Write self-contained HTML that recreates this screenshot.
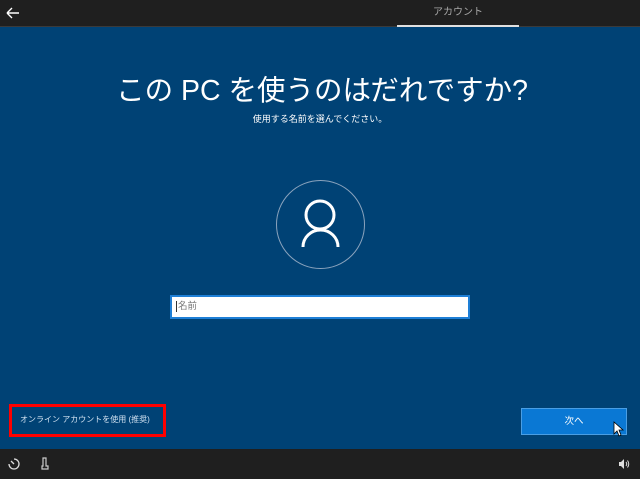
<!DOCTYPE html>
<html><head><meta charset="utf-8"><style>
body{margin:0;width:640px;height:479px;overflow:hidden;background:#004275;font-family:"Liberation Sans","Noto Sans CJK JP",sans-serif;position:relative}
.top{position:absolute;left:0;top:0;width:640px;height:26px;background:#1f1f1f;border-bottom:1px solid #3a3a3a}
.tab{position:absolute;left:397px;top:0;width:122px;height:26px;color:#a8a8a8;font-size:10px;text-align:center;line-height:26px}
.tabline{position:absolute;left:397px;top:25px;width:122px;height:2px;background:#e0e0e0}
h1{position:absolute;left:0;top:74px;width:644px;margin:0;text-align:center;color:#fff;font-weight:normal;font-size:28.5px;line-height:34px;letter-spacing:0px}
.sub{position:absolute;left:0;top:112px;width:640px;text-align:center;color:#fff;font-size:9px}
.circle{position:absolute;left:276px;top:180px;width:87px;height:87px;border:1px solid #8aa3bd;border-radius:50%}
.input{position:absolute;left:170px;top:295px;width:292px;height:20px;background:#fff;border:2px solid #1e7fd6;font-size:9.5px;color:#777;line-height:20px;padding-left:4px;box-sizing:content-box}
.red{position:absolute;left:9px;top:404px;width:151px;height:27px;border:3px solid #f00}
.link{position:absolute;left:20px;top:414px;color:#cfe0f0;font-size:8px;white-space:nowrap}
.btn{position:absolute;left:521px;top:408px;width:104px;height:25px;background:#0a78d4;border:1px solid #4a9ee4;color:#fff;font-size:9.5px;text-align:center;line-height:25px}
.bot{position:absolute;left:0;top:449px;width:640px;height:30px;background:#1f1f1f}
</style></head><body>
<div class="top">
<svg style="position:absolute;left:6px;top:6px" width="14" height="14" viewBox="0 0 14 14"><path d="M1 7H13M1 7L6 2M1 7L6 12" stroke="#fff" stroke-width="1.4" fill="none"/></svg>
<div class="tab">アカウント</div>
</div>
<div class="tabline"></div>
<h1>この PC を使うのはだれですか?</h1>
<div class="sub">使用する名前を選んでください。</div>
<div class="circle"></div>
<svg style="position:absolute;left:296px;top:195px" width="50" height="56" viewBox="0 0 50 56"><circle cx="24" cy="20" r="14" stroke="#fff" stroke-width="3" fill="none"/><path d="M7 52A17.5 17 0 0 1 42 52" stroke="#fff" stroke-width="3" fill="none"/></svg>
<div class="input"><span style="border-left:1px solid #333;padding-left:1px">名前</span></div>
<div class="red"></div>
<div class="link">オンライン アカウントを使用 (推奨)</div>
<div class="btn">次へ</div>
<svg style="position:absolute;left:613px;top:421px" width="12" height="16" viewBox="0 0 12 16"><path d="M1 1V13L4 10L6 15L8 14L6 9H10Z" fill="#fff" stroke="#000" stroke-width="0.8"/></svg>
<div class="bot">
<svg style="position:absolute;left:8px;top:9px" width="12" height="12" viewBox="0 0 12 12"><path d="M6 1A5 5 0 1 1 1 6" stroke="#ddd" stroke-width="1.3" fill="none"/><path d="M6 6L3 3" stroke="#ddd" stroke-width="1.3"/></svg>
<svg style="position:absolute;left:40px;top:8px" width="10" height="14" viewBox="0 0 10 14"><path d="M3 1H6V9H8V12H2V9H3Z" stroke="#ccc" stroke-width="1.2" fill="none"/></svg>
<svg style="position:absolute;left:618px;top:10px" width="12" height="10" viewBox="0 0 12 10"><path d="M1 3H3L6 0V10L3 7H1Z" fill="#ddd"/><path d="M8 3Q9.5 5 8 7M9.5 1.5Q12 5 9.5 8.5" stroke="#ddd" fill="none"/></svg>
</div>
</body></html>
